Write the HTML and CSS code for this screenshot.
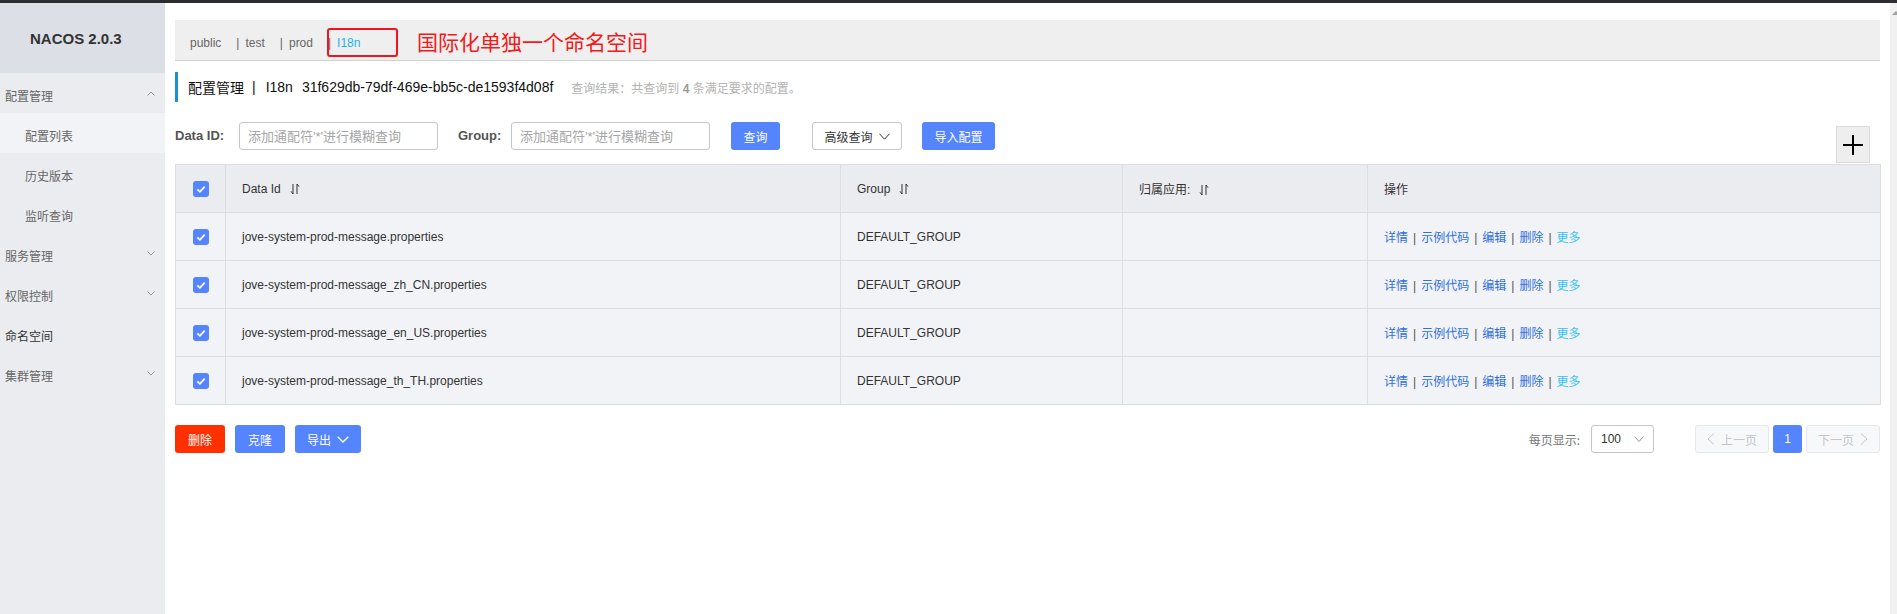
FILE: index.html
```html
<!DOCTYPE html>
<html lang="zh-CN">
<head>
<meta charset="utf-8">
<title>NACOS 2.0.3</title>
<link rel="stylesheet" href="styles.css">
</head>
<body>
<div class="topbar"></div>
<div class="layout">
  <aside class="sidebar">
    <div class="logo">NACOS 2.0.3</div>
    <nav class="menu">
      <div class="menu-item"><span class="label">配置管理</span><svg class="chev" width="8" height="5" viewBox="0 0 8 5"><path d="M0.5 4.5L4 1L7.5 4.5" fill="none" stroke="#999" stroke-width="1"/></svg></div>
      <div class="menu-item sub active"><span class="label">配置列表</span></div>
      <div class="menu-item sub"><span class="label">历史版本</span></div>
      <div class="menu-item sub"><span class="label">监听查询</span></div>
      <div class="menu-item"><span class="label">服务管理</span><svg class="chev" width="8" height="5" viewBox="0 0 8 5"><path d="M0.5 0.5L4 4L7.5 0.5" fill="none" stroke="#999" stroke-width="1"/></svg></div>
      <div class="menu-item"><span class="label">权限控制</span><svg class="chev" width="8" height="5" viewBox="0 0 8 5"><path d="M0.5 0.5L4 4L7.5 0.5" fill="none" stroke="#999" stroke-width="1"/></svg></div>
      <div class="menu-item link"><span class="label">命名空间</span></div>
      <div class="menu-item"><span class="label">集群管理</span><svg class="chev" width="8" height="5" viewBox="0 0 8 5"><path d="M0.5 0.5L4 4L7.5 0.5" fill="none" stroke="#999" stroke-width="1"/></svg></div>
    </nav>
  </aside>

  <main class="main">
    <div class="ns-bar">
      <span class="ns">public</span>
      <span class="ns"><span class="ns-sep">|</span>test</span>
      <span class="ns"><span class="ns-sep">|</span>prod</span>
      <span class="ns"><span class="ns-sep">|</span><span class="ns-active">I18n</span></span>
      <div class="mark-box"></div>
      <div class="mark-text">国际化单独一个命名空间</div>
    </div>

    <div class="title">
      <span>配置管理</span><span class="title-sep">|</span><span>I18n</span><span class="title-id">31f629db-79df-469e-bb5c-de1593f4d08f</span>
      <span class="title-sub">查询结果：共查询到 <b>4</b> 条满足要求的配置。</span>
    </div>

    <div class="toolbar">
      <label class="f-label label-id">Data ID:</label>
      <input class="f-input" type="text" placeholder="添加通配符'*'进行模糊查询">
      <label class="f-label label-group">Group:</label>
      <input class="f-input" type="text" placeholder="添加通配符'*'进行模糊查询">
      <button class="btn primary btn-query">查询</button>
      <button class="btn normal btn-adv">高级查询<svg width="11" height="7" viewBox="0 0 11 7"><path d="M0.5 0.8L5.5 6.2L10.5 0.8" fill="none" stroke="#333" stroke-width="1"/></svg></button>
      <button class="btn primary btn-import">导入配置</button>
      <button class="plus-btn"><svg width="20" height="20" viewBox="0 0 20 20"><path d="M10 0V20M0 10H20" stroke="#000" stroke-width="2"/></svg></button>
    </div>

    <table class="table">
      <colgroup>
        <col class="c-check"><col class="c-id"><col class="c-group"><col class="c-app"><col class="c-ops">
      </colgroup>
      <thead>
        <tr>
          <th class="check"><span class="cb"><svg width="16" height="16" viewBox="0 0 16 16"><path d="M4.3 8.3L6.9 10.8L11.7 5.6" fill="none" stroke="#fff" stroke-width="1.8"/></svg></span></th>
          <th>Data Id<svg class="sort" width="10" height="12" viewBox="0 0 10 12"><path d="M3 1V11M3 11L1 8.3M7 11V1M7 1L9 3.7" fill="none" stroke="#333" stroke-width="1"/></svg></th>
          <th>Group<svg class="sort" width="10" height="12" viewBox="0 0 10 12"><path d="M3 1V11M3 11L1 8.3M7 11V1M7 1L9 3.7" fill="none" stroke="#333" stroke-width="1"/></svg></th>
          <th>归属应用:<svg class="sort" width="10" height="12" viewBox="0 0 10 12"><path d="M3 1V11M3 11L1 8.3M7 11V1M7 1L9 3.7" fill="none" stroke="#333" stroke-width="1"/></svg></th>
          <th>操作</th>
        </tr>
      </thead>
      <tbody>
        <tr>
          <td class="check"><span class="cb"><svg width="16" height="16" viewBox="0 0 16 16"><path d="M4.3 8.3L6.9 10.8L11.7 5.6" fill="none" stroke="#fff" stroke-width="1.8"/></svg></span></td>
          <td>jove-system-prod-message.properties</td>
          <td>DEFAULT_GROUP</td>
          <td></td>
          <td class="ops"><a>详情</a><span class="sep">|</span><a>示例代码</a><span class="sep">|</span><a>编辑</a><span class="sep">|</span><a>删除</a><span class="sep">|</span><a class="more">更多</a></td>
        </tr>
        <tr>
          <td class="check"><span class="cb"><svg width="16" height="16" viewBox="0 0 16 16"><path d="M4.3 8.3L6.9 10.8L11.7 5.6" fill="none" stroke="#fff" stroke-width="1.8"/></svg></span></td>
          <td>jove-system-prod-message_zh_CN.properties</td>
          <td>DEFAULT_GROUP</td>
          <td></td>
          <td class="ops"><a>详情</a><span class="sep">|</span><a>示例代码</a><span class="sep">|</span><a>编辑</a><span class="sep">|</span><a>删除</a><span class="sep">|</span><a class="more">更多</a></td>
        </tr>
        <tr>
          <td class="check"><span class="cb"><svg width="16" height="16" viewBox="0 0 16 16"><path d="M4.3 8.3L6.9 10.8L11.7 5.6" fill="none" stroke="#fff" stroke-width="1.8"/></svg></span></td>
          <td>jove-system-prod-message_en_US.properties</td>
          <td>DEFAULT_GROUP</td>
          <td></td>
          <td class="ops"><a>详情</a><span class="sep">|</span><a>示例代码</a><span class="sep">|</span><a>编辑</a><span class="sep">|</span><a>删除</a><span class="sep">|</span><a class="more">更多</a></td>
        </tr>
        <tr>
          <td class="check"><span class="cb"><svg width="16" height="16" viewBox="0 0 16 16"><path d="M4.3 8.3L6.9 10.8L11.7 5.6" fill="none" stroke="#fff" stroke-width="1.8"/></svg></span></td>
          <td>jove-system-prod-message_th_TH.properties</td>
          <td>DEFAULT_GROUP</td>
          <td></td>
          <td class="ops"><a>详情</a><span class="sep">|</span><a>示例代码</a><span class="sep">|</span><a>编辑</a><span class="sep">|</span><a>删除</a><span class="sep">|</span><a class="more">更多</a></td>
        </tr>
      </tbody>
    </table>

    <div class="footer">
      <div class="batch">
        <button class="btn danger btn-sm">删除</button>
        <button class="btn primary btn-sm">克隆</button>
        <button class="btn primary btn-export">导出<svg width="12" height="7" viewBox="0 0 12 7"><path d="M0.7 0.7L6 6L11.3 0.7" fill="none" stroke="#fff" stroke-width="1.4"/></svg></button>
      </div>
      <div class="pager">
        <span class="ps-label">每页显示:</span>
        <div class="select"><span>100</span><svg width="10" height="6" viewBox="0 0 10 6"><path d="M0.5 0.5L5 5.5L9.5 0.5" fill="none" stroke="#999" stroke-width="1"/></svg></div>
        <button class="pg pg-prev"><svg width="8" height="12" viewBox="0 0 8 12"><path d="M7 0.5L1 6L7 11.5" fill="none" stroke="#c4c6cf" stroke-width="1"/></svg>上一页</button>
        <button class="pg pg-cur">1</button>
        <button class="pg pg-next">下一页<svg width="8" height="12" viewBox="0 0 8 12"><path d="M1 0.5L7 6L1 11.5" fill="none" stroke="#c4c6cf" stroke-width="1"/></svg></button>
      </div>
    </div>
  </main>

  <div class="scrollbar"><span class="scroll-up"></span></div>
</div>
</body>
</html>
```

FILE: styles.css
```css
* {
  box-sizing: border-box;
}

html, body {
  margin: 0;
  padding: 0;
  height: 614px;
  overflow: hidden;
}

body {
  font-family: "Liberation Sans", "Noto Sans CJK SC", sans-serif;
  font-size: 12px;
  color: #333;
  background: #fff;
}

.topbar {
  height: 3px;
  background: #2b2d30;
}

.layout {
  display: flex;
  height: 611px;
}

/* ---------- sidebar ---------- */
.sidebar {
  width: 165px;
  flex: none;
  background: #eaecf0;
}

.logo {
  height: 70px;
  background: #dcdfe5;
  display: flex;
  align-items: center;
  padding-left: 30px;
  font-size: 15px;
  font-weight: bold;
  color: #333;
}

.menu-item {
  height: 40px;
  display: flex;
  align-items: center;
  justify-content: space-between;
  padding: 0 10px 0 5px;
  color: #666;
  font-size: 12px;
  font-family: "Noto Sans CJK SC", sans-serif;
}

.menu-item .label {
  padding-top: 5px;
}

.menu-item.sub {
  padding-left: 25px;
}

.menu-item.active {
  background: #f2f3f6;
}

.menu-item.link {
  color: #333;
}

/* ---------- main ---------- */
.main {
  flex: 1;
  min-width: 0;
  padding: 17px 10px 0 10px;
}

.ns-bar {
  position: relative;
  height: 41px;
  background: #efefef;
  border-bottom: 1px solid #d0d0d0;
  display: flex;
  align-items: center;
  padding: 5px 0 0 15px;
  color: #666;
}

.ns {
  margin-right: 15px;
}

.ns-sep {
  margin-right: 6px;
}

.ns-active {
  color: #18b4ee;
}

.mark-box {
  position: absolute;
  left: 152px;
  top: 8px;
  width: 71px;
  height: 29px;
  border: 2px solid #f0141e;
  border-radius: 3px;
}

.mark-text {
  position: absolute;
  left: 242px;
  top: 6px;
  line-height: 30px;
  font-size: 21px;
  color: #f21a1a;
  font-family: "Noto Sans CJK SC", sans-serif;
}

.title {
  margin-top: 11px;
  height: 30px;
  border-left: 3px solid #1990d1;
  padding-left: 10px;
  display: flex;
  align-items: center;
  font-size: 14px;
  color: #111;
}

.title-sep {
  margin: 0 10px 0 8px;
}

.title-id {
  margin-left: 9px;
}

.title-sub {
  margin-left: 18px;
  font-size: 12px;
  color: #b3b3b3;
}

.title-sub b {
  color: #999;
}

/* ---------- toolbar ---------- */
.toolbar {
  display: flex;
  align-items: flex-start;
  margin-top: 20px;
}

.f-label {
  line-height: 28px;
  font-size: 13px;
  font-weight: bold;
  color: #555;
}

.label-id {
  width: 64px;
}

.label-group {
  width: 53px;
  margin-left: 20px;
}

.f-input {
  width: 199px;
  height: 28px;
  border: 1px solid #c4c6cf;
  border-radius: 3px;
  padding: 0 8px;
  font-family: "Liberation Sans", "Noto Sans CJK SC", sans-serif;
  font-size: 13px;
  color: #333;
  background: #fff;
  outline: none;
}

.f-input::placeholder {
  color: #a6a6a6;
}

.btn {
  height: 28px;
  border: none;
  border-radius: 3px;
  padding: 0;
  font-family: "Noto Sans CJK SC", sans-serif;
  font-size: 12px;
  color: #fff;
  display: inline-flex;
  align-items: center;
  justify-content: center;
  gap: 6px;
}

.btn.primary {
  background: #5584ff;
}

.btn.danger {
  background: #ff3000;
}

.btn.normal {
  background: #fff;
  border: 1px solid #c4c6cf;
  color: #333;
}

.btn-query {
  width: 49px;
  margin-left: 21px;
}

.btn-adv {
  width: 90px;
  margin-left: 32px;
}

.btn-import {
  width: 73px;
  margin-left: 20px;
}

.plus-btn {
  margin-left: auto;
  margin-top: 4px;
  margin-right: 10px;
  width: 34px;
  height: 37px;
  padding: 0;
  background: #eeeeee;
  border: 1px solid #dcdcdc;
  display: flex;
  align-items: center;
  justify-content: center;
}

/* ---------- table ---------- */
.table {
  width: 100%;
  margin-top: 1px;
  border-collapse: collapse;
  table-layout: fixed;
}

.c-check { width: 50px; }
.c-id { width: 615px; }
.c-group { width: 282px; }
.c-app { width: 245px; }
.c-ops { width: 513px; }

.table th,
.table td {
  height: 48px;
  border: 1px solid #dcdee3;
  padding: 0 16px;
  text-align: left;
  vertical-align: middle;
  font-weight: normal;
  font-size: 12px;
  color: #333;
}

.table th {
  background: #ebecf0;
}

.table td {
  background: #f2f3f7;
}

.table .check {
  padding: 0;
  text-align: center;
}

.cb {
  display: inline-block;
  width: 16px;
  height: 16px;
  border-radius: 3px;
  background: #5584ff;
  vertical-align: middle;
}

.cb svg {
  display: block;
}

.sort {
  margin-left: 9px;
  vertical-align: -2px;
}

.ops a {
  color: #2f6fdf;
  text-decoration: none;
}

.ops a.more {
  color: #35c3ec;
}

.ops .sep {
  margin: 0 5px;
  color: #555;
}

/* ---------- footer ---------- */
.footer {
  display: flex;
  justify-content: space-between;
  align-items: center;
  margin-top: 20px;
}

.batch {
  display: flex;
  gap: 10px;
}

.btn-sm {
  width: 50px;
}

.btn-export {
  width: 66px;
}

.pager {
  display: flex;
  align-items: center;
}

.ps-label {
  font-family: "Noto Sans CJK SC", sans-serif;
  color: #777;
  margin-right: 11px;
}

.select {
  width: 63px;
  height: 28px;
  border: 1px solid #c4c6cf;
  border-radius: 3px;
  display: flex;
  align-items: center;
  justify-content: space-between;
  padding: 0 9px 0 9px;
  font-size: 12px;
  color: #333;
}

.pg {
  height: 28px;
  border-radius: 3px;
  font-family: "Noto Sans CJK SC", sans-serif;
  font-size: 12px;
  display: inline-flex;
  align-items: center;
  justify-content: center;
  gap: 6px;
  padding: 0;
}

.pg-prev,
.pg-next {
  width: 74px;
  background: #f7f8fa;
  border: 1px solid #e6e7eb;
  color: #c4c6cf;
}

.pg-prev {
  margin-left: 41px;
}

.pg-cur {
  width: 29px;
  margin: 0 4px;
  border: none;
  background: #5584ff;
  color: #fff;
  font-family: "Liberation Sans", sans-serif;
}

/* ---------- scrollbar strip ---------- */
.scrollbar {
  width: 7px;
  flex: none;
  background: #f1f1f1;
  position: relative;
}

.scroll-up {
  position: absolute;
  top: 8px;
  left: 2px;
  width: 0;
  height: 0;
  border-left: 4px solid transparent;
  border-right: 4px solid transparent;
  border-bottom: 4px solid #a3a3a3;
}
```
